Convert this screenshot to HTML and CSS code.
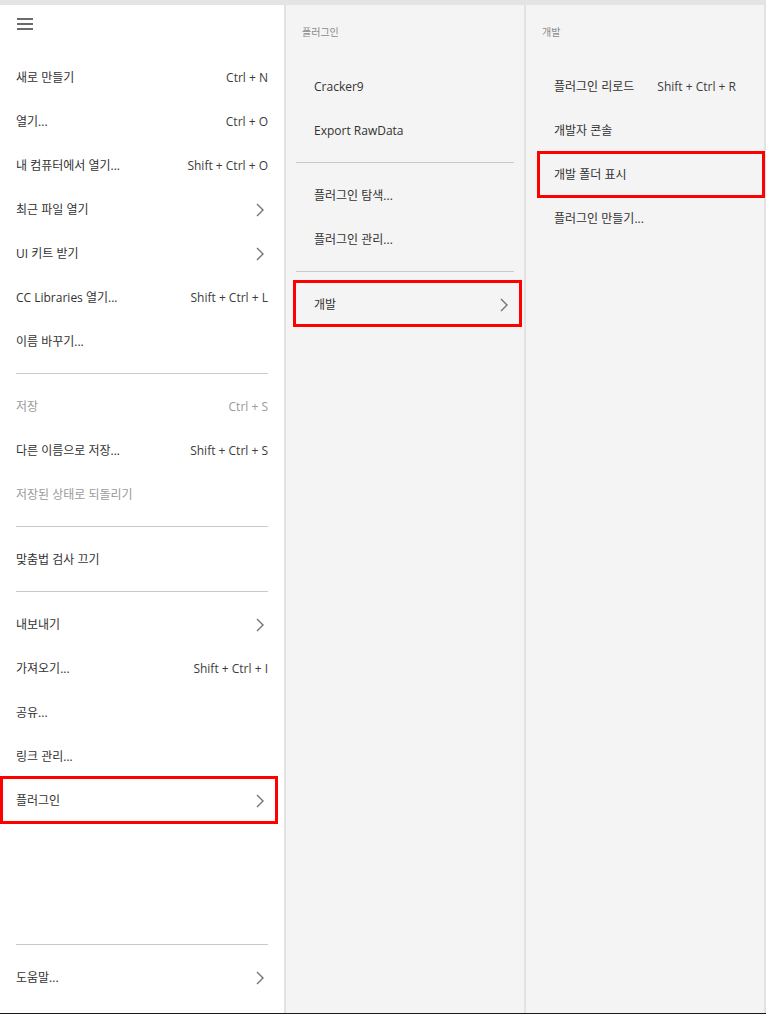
FILE: index.html
```html
<!DOCTYPE html>
<html lang="ko">
<head>
  <meta charset="utf-8">
  <title>메뉴 - 플러그인</title>
  <link rel="stylesheet" href="styles.css">
</head>
<body>
  <div class="topbar"></div>

  <div class="panels">
    <!-- Main menu -->
    <div class="panel main">
      <div class="burger">
        <svg width="16" height="12" viewBox="0 0 16 12"><rect y="0" width="16" height="2"/><rect y="5" width="16" height="2"/><rect y="10" width="16" height="2"/></svg>
      </div>

      <div class="item"><span>새로 만들기</span><span class="key">Ctrl + N</span></div>
      <div class="item"><span>열기...</span><span class="key">Ctrl + O</span></div>
      <div class="item"><span>내 컴퓨터에서 열기...</span><span class="key">Shift + Ctrl + O</span></div>
      <div class="item"><span>최근 파일 열기</span><span class="chev"><svg width="8" height="14" viewBox="0 0 8 14"><polyline points="1,1 7,7 1,13"/></svg></span></div>
      <div class="item"><span>UI 키트 받기</span><span class="chev"><svg width="8" height="14" viewBox="0 0 8 14"><polyline points="1,1 7,7 1,13"/></svg></span></div>
      <div class="item"><span>CC Libraries 열기...</span><span class="key">Shift + Ctrl + L</span></div>
      <div class="item"><span>이름 바꾸기...</span></div>
      <div class="sep"></div>
      <div class="item disabled"><span>저장</span><span class="key">Ctrl + S</span></div>
      <div class="item"><span>다른 이름으로 저장...</span><span class="key">Shift + Ctrl + S</span></div>
      <div class="item disabled"><span>저장된 상태로 되돌리기</span></div>
      <div class="sep"></div>
      <div class="item"><span>맞춤법 검사 끄기</span></div>
      <div class="sep"></div>
      <div class="item"><span>내보내기</span><span class="chev"><svg width="8" height="14" viewBox="0 0 8 14"><polyline points="1,1 7,7 1,13"/></svg></span></div>
      <div class="item"><span>가져오기...</span><span class="key">Shift + Ctrl + I</span></div>
      <div class="item"><span>공유...</span></div>
      <div class="item"><span>링크 관리...</span></div>
      <div class="item marked"><span>플러그인</span><span class="chev"><svg width="8" height="14" viewBox="0 0 8 14"><polyline points="1,1 7,7 1,13"/></svg></span></div>

      <div class="spacer"></div>
      <div class="sep"></div>
      <div class="item"><span>도움말...</span><span class="chev"><svg width="8" height="14" viewBox="0 0 8 14"><polyline points="1,1 7,7 1,13"/></svg></span></div>
    </div>

    <!-- Plugins submenu -->
    <div class="panel sub plugins">
      <div class="title">플러그인</div>
      <div class="item"><span>Cracker9</span></div>
      <div class="item"><span>Export RawData</span></div>
      <div class="sep"></div>
      <div class="item"><span>플러그인 탐색...</span></div>
      <div class="item"><span>플러그인 관리...</span></div>
      <div class="sep"></div>
      <div class="item marked"><span>개발</span><span class="chev"><svg width="8" height="14" viewBox="0 0 8 14"><polyline points="1,1 7,7 1,13"/></svg></span></div>
    </div>

    <!-- Development submenu -->
    <div class="panel sub dev">
      <div class="title">개발</div>
      <div class="item"><span>플러그인 리로드</span><span class="key">Shift + Ctrl + R</span></div>
      <div class="item"><span>개발자 콘솔</span></div>
      <div class="item marked"><span>개발 폴더 표시</span></div>
      <div class="item"><span>플러그인 만들기...</span></div>
    </div>
  </div>

  <div class="bottombar"></div>
</body>
</html>
```

FILE: styles.css
```css
:root {
  --text: #323232;
  --muted: #9a9a9a;
  --line: #c9c9c9;
  --divider: #e2e2e2;
  --sub-bg: #f4f4f4;
  --mark: #ff0000;
}

body {
  margin: 0;
  height: 1014px;
  display: flex;
  flex-direction: column;
  overflow: hidden;
  background: #fff;
  color: var(--text);
  font-family: "Open Sans", "Noto Sans CJK KR", sans-serif;
  font-size: 12px;
  line-height: 16px;
}

.topbar {
  height: 5px;
  background: #e4e4e4;
}

.bottombar {
  height: 1px;
  background: #1a1a1a;
}

.panels {
  flex: 1;
  display: flex;
}

.panel {
  display: flex;
  flex-direction: column;
}

.panel.main {
  width: 284px;
  background: #fff;
  padding-bottom: 14px;
  box-sizing: border-box;
}

.panel.sub {
  width: 238px;
  background: var(--sub-bg);
  border-left: 2px solid var(--divider);
}

.panel.dev {
  border-right: 2px solid var(--divider);
}

/* Hamburger */
.burger {
  height: 50px;
  box-sizing: border-box;
  padding: 13px 0 0 17px;
}

.burger svg {
  display: block;
  fill: #6b6b6b;
}

/* Menu rows */
.item {
  height: 44px;
  box-sizing: border-box;
  flex-shrink: 0;
  display: flex;
  align-items: center;
  justify-content: space-between;
  padding: 2px 16px 0;
  white-space: nowrap;
  position: relative;
}

.item.disabled {
  color: var(--muted);
}

.key {
  color: #3c3c3c;
}

.item.disabled .key {
  color: var(--muted);
}

.chev {
  display: flex;
  margin-right: 4px;
}

.chev svg {
  fill: none;
  stroke: #737373;
  stroke-width: 1.4;
}

.sep {
  height: 1px;
  flex-shrink: 0;
  background: var(--line);
  margin: 10px 16px;
}

.spacer {
  flex: 1;
}

/* Submenus */
.sub .title {
  padding: 20px 16px 0;
  margin-bottom: 25px;
  height: 14px;
  line-height: 14px;
  font-size: 10px;
  color: #8a8a8a;
}

.sub .item {
  padding: 2px 28px 0;
}

.sub .chev {
  margin-right: -12px;
}

.sub .sep {
  margin: 10px 10px;
}

/* Red annotation boxes */
.item.marked::after {
  content: '';
  position: absolute;
  border: 3px solid var(--mark);
  pointer-events: none;
  z-index: 2;
}

.main .item.marked::after { inset: -2px 6px -2px 0; }
.plugins .item.marked::after { inset: -2px 2px -1px 7px; }
.dev .item.marked::after { inset: -1px -1px -2px 11px; }
```
